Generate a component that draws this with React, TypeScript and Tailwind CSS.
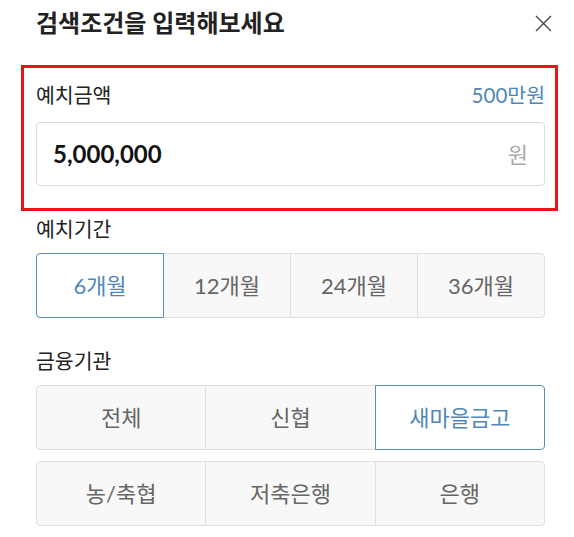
import React, { useState } from 'react';

const font = { fontFamily: 'Lato, "Noto Sans CJK KR", sans-serif' };

const periods = ['6개월', '12개월', '24개월', '36개월'];
const institutions = [
  ['전체', '신협', '새마을금고'],
  ['농/축협', '저축은행', '은행'],
];

function Segments({
  items,
  selected,
  onSelect,
}: {
  items: string[];
  selected: string;
  onSelect: (v: string) => void;
}) {
  return (
    <div className="flex h-[65px] w-full">
      {items.map((item, i) => {
        const active = item === selected;
        const first = i === 0;
        const last = i === items.length - 1;
        return (
          <button
            key={item}
            type="button"
            onClick={() => onSelect(item)}
            className={
              'relative flex flex-1 items-center justify-center border text-[22px] ' +
              (first ? 'rounded-l-[4px] ' : '-ml-px ') +
              (last ? 'rounded-r-[4px] ' : '') +
              (active
                ? 'z-10 border-[#5a8dbd] bg-white text-[#4f87ba]'
                : 'border-[#dedede] bg-[#f8f8f8] text-[#666]')
            }
          >
            {item}
          </button>
        );
      })}
    </div>
  );
}

export default function App() {
  const [period, setPeriod] = useState('6개월');
  const [inst, setInst] = useState('새마을금고');

  return (
    <div className="min-h-screen w-[574px] bg-white pl-[36px] pr-[29px]" style={font}>
      {/* 헤더 */}
      <div className="flex h-[46px] items-center justify-between">
        <h1 className="text-[24px] font-bold text-[#222]">검색조건을 입력해보세요</h1>
        <button type="button" className="mr-[-7px] text-[#444]" aria-label="닫기">
          <svg width="17" height="17" viewBox="0 0 17 17" fill="none" stroke="currentColor" strokeWidth="1.4">
            <path d="M1 1 L16 16 M16 1 L1 16" />
          </svg>
        </button>
      </div>

      {/* 예치금액 */}
      <div className="mt-[19px] -ml-[15px] -mr-[13px] border-[3px] border-[#e8141c] pl-[12px] pr-[10px] pt-[7px] pb-[22px]">
        <div className="flex h-[40px] items-center justify-between">
          <span className="text-[20.5px] text-[#222]">예치금액</span>
          <span className="text-[20.5px] text-[#4f87ba]">500만원</span>
        </div>
        <div className="mt-[7px] flex h-[64px] items-center justify-between rounded-[4px] border border-[#dcdcdc] pl-[16px] pr-[16px]">
          <span className="text-[24px] font-bold text-[#111]">5,000,000</span>
          <span className="text-[22px] text-[#aaa]">원</span>
        </div>
      </div>

      {/* 예치기간 */}
      <div className="flex h-[36px] items-center">
        <span className="text-[20.5px] text-[#222]">예치기간</span>
      </div>
      <div className="mt-[6px]">
        <Segments items={periods} selected={period} onSelect={setPeriod} />
      </div>

      {/* 금융기관 */}
      <div className="mt-[25px] flex h-[36px] items-center">
        <span className="text-[20.5px] text-[#222]">금융기관</span>
      </div>
      <div className="mt-[6px] flex flex-col gap-[11px]">
        {institutions.map((row, i) => (
          <Segments key={i} items={row} selected={inst} onSelect={setInst} />
        ))}
      </div>
    </div>
  );
}
